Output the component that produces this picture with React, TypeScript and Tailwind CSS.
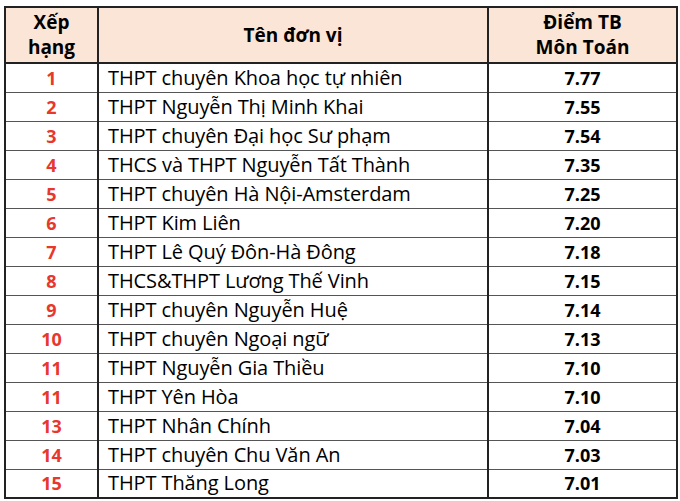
import React from "react";

const rows: [string, string, string][] = [
  ["1", "THPT chuyên Khoa học tự nhiên", "7.77"],
  ["2", "THPT Nguyễn Thị Minh Khai", "7.55"],
  ["3", "THPT chuyên Đại học Sư phạm", "7.54"],
  ["4", "THCS và THPT Nguyễn Tất Thành", "7.35"],
  ["5", "THPT chuyên Hà Nội-Amsterdam", "7.25"],
  ["6", "THPT Kim Liên", "7.20"],
  ["7", "THPT Lê Quý Đôn-Hà Đông", "7.18"],
  ["8", "THCS&THPT Lương Thế Vinh", "7.15"],
  ["9", "THPT chuyên Nguyễn Huệ", "7.14"],
  ["10", "THPT chuyên Ngoại ngữ", "7.13"],
  ["11", "THPT Nguyễn Gia Thiều", "7.10"],
  ["11", "THPT Yên Hòa", "7.10"],
  ["13", "THPT Nhân Chính", "7.04"],
  ["14", "THPT chuyên Chu Văn An", "7.03"],
  ["15", "THPT Thăng Long", "7.01"],
];

const App = () => {
  return (
    <div className="w-[680px] h-[501px] bg-white pt-[6px] pl-[4px] font-['Open_Sans',sans-serif] text-black">
      <table className="w-[672px] border-collapse border-2 border-[#222] table-fixed">
        <colgroup>
          <col className="w-[93px]" />
          <col className="w-[390px]" />
          <col className="w-[189px]" />
        </colgroup>
        <thead>
          {/* Header */}
          <tr className="h-[56px] bg-[#fbe5d6] text-[19px] leading-[25px]">
            <th className="border-r-2 border-b-2 border-[#222] text-center font-bold">
              Xếp
              <br />
              hạng
            </th>
            <th className="border-r-2 border-b-2 border-[#222] text-center font-bold">
              Tên đơn vị
            </th>
            <th className="border-b-2 border-[#222] text-center font-bold">
              Điểm TB
              <br />
              Môn Toán
            </th>
          </tr>
        </thead>
        <tbody>
          {rows.map(([rank, name, score], i) => (
            <tr key={i} className="h-[29px] border-t border-[#555] leading-none">
              <td className="border-r-2 border-[#222] text-center text-[18px] font-bold text-[#e8372c]">
                {rank}
              </td>
              <td className="border-r-2 border-[#222] pl-[9px] text-[20px] tracking-[-0.1px]">{name}</td>
              <td className="text-center text-[18px] font-bold">{score}</td>
            </tr>
          ))}
        </tbody>
      </table>
    </div>
  );
};

export default App;
